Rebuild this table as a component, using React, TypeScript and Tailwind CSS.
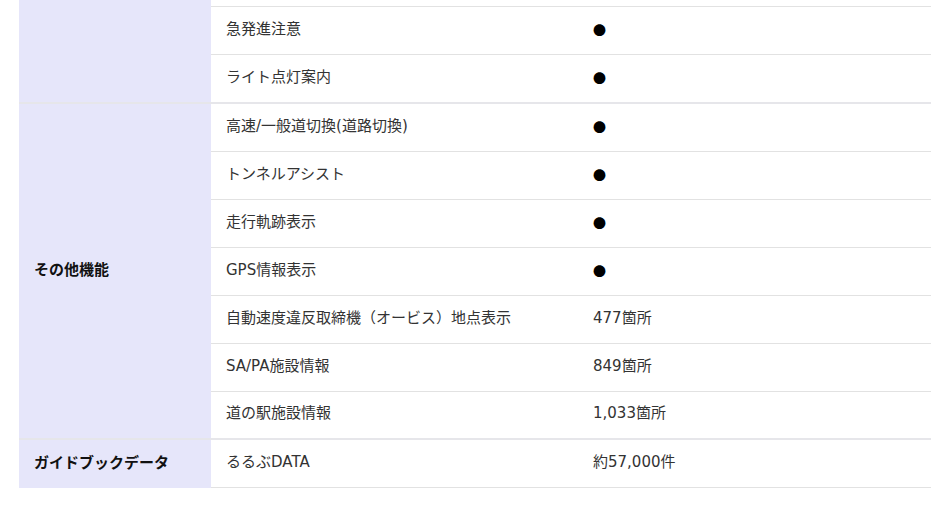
import React from "react";

type Row = { label: string; value: string; h: string; border: boolean };

const font = { fontFamily: '"DejaVu Sans", "Noto Sans CJK JP", sans-serif' };
const cjk = { fontFamily: '"Noto Sans CJK JP", sans-serif' };

function Value({ v }: { v: string }) {
  if (v === "●") {
    return (
      <span className="text-[13px] leading-none text-black" style={cjk}>
        ●
      </span>
    );
  }
  return <span>{v}</span>;
}

function RowView({ r }: { r: Row }) {
  return (
    <div
      className={`flex items-center pb-[3px] ${r.h} ${r.border ? "border-b border-[#e2e2e2]" : ""}`}
    >
      <div className="w-[367px] pl-[15px] shrink-0">{r.label}</div>
      <div className="flex-1 pl-[15px] flex items-center">
        {r.value && <Value v={r.value} />}
      </div>
    </div>
  );
}

function Group({
  title,
  rows,
  bottom,
  top,
}: {
  title: string;
  rows: Row[];
  bottom: boolean;
  top?: React.ReactNode;
}) {
  return (
    <div className={`flex ${bottom ? "border-b-2 border-[#e6e6ea]" : ""}`}>
      <div
        className="w-[192px] shrink-0 bg-[#e6e6fa] flex items-center pl-[15px] pb-[3px] font-bold text-[#111]"
        style={cjk}
      >
        {title}
      </div>
      <div className="flex-1 flex flex-col">
        {top}
        {rows.map((r, i) => (
          <RowView key={i} r={r} />
        ))}
      </div>
    </div>
  );
}

export default function App() {
  const groupA: Row[] = [
    { label: "急発進注意", value: "●", h: "h-[48px]", border: true },
    { label: "ライト点灯案内", value: "●", h: "h-[47px]", border: false },
  ];
  const groupB: Row[] = [
    { label: "高速/一般道切換(道路切換)", value: "●", h: "h-[48px]", border: true },
    { label: "トンネルアシスト", value: "●", h: "h-[48px]", border: true },
    { label: "走行軌跡表示", value: "●", h: "h-[48px]", border: true },
    { label: "GPS情報表示", value: "●", h: "h-[48px]", border: true },
    { label: "自動速度違反取締機（オービス）地点表示", value: "477箇所", h: "h-[48px]", border: true },
    { label: "SA/PA施設情報", value: "849箇所", h: "h-[48px]", border: true },
    { label: "道の駅施設情報", value: "1,033箇所", h: "h-[46px]", border: false },
  ];
  const groupC: Row[] = [
    { label: "るるぶDATA", value: "約57,000件", h: "h-[48px]", border: true },
  ];
  return (
    <div
      className="w-[950px] h-[523px] bg-white overflow-hidden text-[15px] text-[#333]"
      style={font}
    >
      <div className="ml-[19px] w-[912px]">
        <Group
          title=""
          rows={groupA}
          bottom
          top={<div className="h-[7px] border-b border-[#e2e2e2]" />}
        />
        <Group title="その他機能" rows={groupB} bottom />
        <Group title="ガイドブックデータ" rows={groupC} bottom={false} />
      </div>
    </div>
  );
}
